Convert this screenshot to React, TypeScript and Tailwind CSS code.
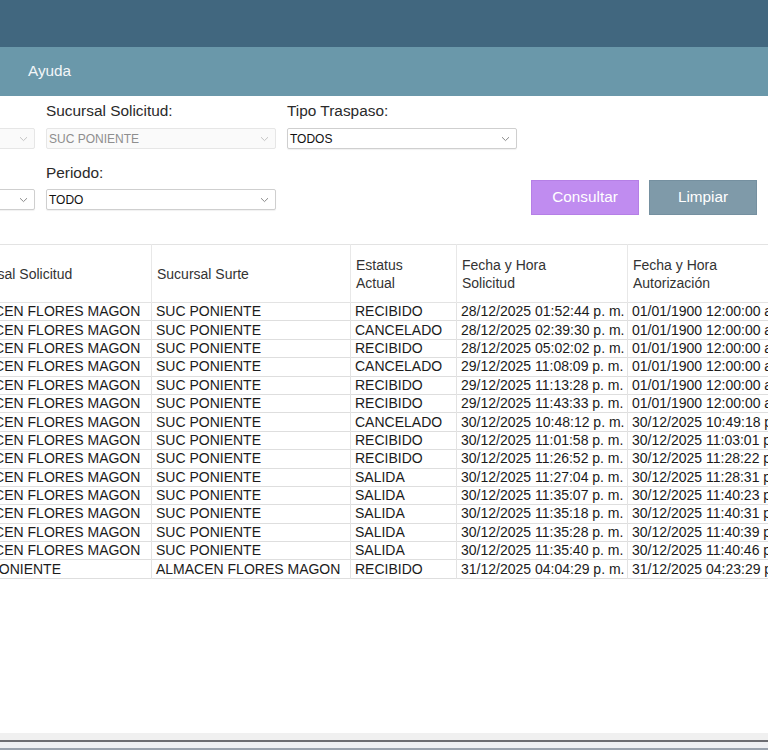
import React from "react";

const rows: [string, string, string, string, string][] = [
  ["ALMACEN FLORES MAGON", "SUC PONIENTE", "RECIBIDO", "28/12/2025 01:52:44 p. m.", "01/01/1900 12:00:00 a. m."],
  ["ALMACEN FLORES MAGON", "SUC PONIENTE", "CANCELADO", "28/12/2025 02:39:30 p. m.", "01/01/1900 12:00:00 a. m."],
  ["ALMACEN FLORES MAGON", "SUC PONIENTE", "RECIBIDO", "28/12/2025 05:02:02 p. m.", "01/01/1900 12:00:00 a. m."],
  ["ALMACEN FLORES MAGON", "SUC PONIENTE", "CANCELADO", "29/12/2025 11:08:09 p. m.", "01/01/1900 12:00:00 a. m."],
  ["ALMACEN FLORES MAGON", "SUC PONIENTE", "RECIBIDO", "29/12/2025 11:13:28 p. m.", "01/01/1900 12:00:00 a. m."],
  ["ALMACEN FLORES MAGON", "SUC PONIENTE", "RECIBIDO", "29/12/2025 11:43:33 p. m.", "01/01/1900 12:00:00 a. m."],
  ["ALMACEN FLORES MAGON", "SUC PONIENTE", "CANCELADO", "30/12/2025 10:48:12 p. m.", "30/12/2025 10:49:18 p. m."],
  ["ALMACEN FLORES MAGON", "SUC PONIENTE", "RECIBIDO", "30/12/2025 11:01:58 p. m.", "30/12/2025 11:03:01 p. m."],
  ["ALMACEN FLORES MAGON", "SUC PONIENTE", "RECIBIDO", "30/12/2025 11:26:52 p. m.", "30/12/2025 11:28:22 p. m."],
  ["ALMACEN FLORES MAGON", "SUC PONIENTE", "SALIDA", "30/12/2025 11:27:04 p. m.", "30/12/2025 11:28:31 p. m."],
  ["ALMACEN FLORES MAGON", "SUC PONIENTE", "SALIDA", "30/12/2025 11:35:07 p. m.", "30/12/2025 11:40:23 p. m."],
  ["ALMACEN FLORES MAGON", "SUC PONIENTE", "SALIDA", "30/12/2025 11:35:18 p. m.", "30/12/2025 11:40:31 p. m."],
  ["ALMACEN FLORES MAGON", "SUC PONIENTE", "SALIDA", "30/12/2025 11:35:28 p. m.", "30/12/2025 11:40:39 p. m."],
  ["ALMACEN FLORES MAGON", "SUC PONIENTE", "SALIDA", "30/12/2025 11:35:40 p. m.", "30/12/2025 11:40:46 p. m."],
  ["SUC PONIENTE", "ALMACEN FLORES MAGON", "RECIBIDO", "31/12/2025 04:04:29 p. m.", "31/12/2025 04:23:29 p. m."],
];

function Chevron({ light }: { light?: boolean }) {
  return (
    <svg width="9" height="6" viewBox="0 0 9 6" className="shrink-0">
      <path d="M1 1.2 L4.5 4.6 L8 1.2" fill="none" stroke={light ? "#c4c4c4" : "#8a8a8a"} strokeWidth="1" />
    </svg>
  );
}

function Select({ value, disabled }: { value: string; disabled?: boolean }) {
  return (
    <div
      className={
        disabled
          ? "h-[21px] w-full flex items-center justify-between pl-[2px] pr-[6px] border border-[#e6e6e6] bg-[#fafafa] rounded-[2px] text-[12px] text-[#8e8e8e]"
          : "h-[21px] w-full flex items-center justify-between pl-[2px] pr-[6px] border border-[#cfcfcf] bg-white rounded-[2px] text-[12px] text-[#111] shadow-[0_1px_1px_rgba(0,0,0,0.06)]"
      }
    >
      <span className="leading-none">{value}</span>
      <Chevron light={disabled} />
    </div>
  );
}

function Field({ label, value, disabled }: { label: string; value: string; disabled?: boolean }) {
  return (
    <div className="w-[230px] shrink-0 flex flex-col">
      <div className="h-[20px] leading-[20px] text-[15.4px] text-[#2a2a2a]">{label}</div>
      <div className="mt-[7px]">
        <Select value={value} disabled={disabled} />
      </div>
    </div>
  );
}

const headers = [
  ["Sucursal Solicitud"],
  ["Sucursal Surte"],
  ["Estatus", "Actual"],
  ["Fecha y Hora", "Solicitud"],
  ["Fecha y Hora", "Autorización"],
];

export default function App() {
  return (
    <div
      className="w-[768px] h-[750px] overflow-hidden flex flex-col bg-white"
      style={{ fontFamily: '"Liberation Sans", Arial, sans-serif' }}
    >
      <div className="h-[47px] bg-[#41677f] shrink-0" />
      <div className="h-[49px] bg-[#6a98aa] shrink-0 flex items-center pl-[28px]">
        <span className="text-[15.3px] text-[#f2f6f8]">Ayuda</span>
      </div>

      <div className="pt-[5px] shrink-0">
        <div className="-ml-[195px] flex gap-[11px]">
          <Field label="Sucursal:" value="ALMACEN" disabled />
          <Field label="Sucursal Solicitud:" value="SUC PONIENTE" disabled />
          <Field label="Tipo Traspaso:" value="TODOS" />
        </div>
        <div className="-ml-[195px] mt-[14px] flex gap-[11px] pr-[11px]">
          <div className="w-[230px] shrink-0 flex flex-col">
            <div className="h-[20px]" />
            <div className="mt-[6px]">
              <Select value="TODAS" />
            </div>
          </div>
          <div className="w-[230px] shrink-0 flex flex-col">
            <div className="h-[20px] leading-[20px] text-[15.4px] text-[#2a2a2a]">Periodo:</div>
            <div className="mt-[6px]">
              <Select value="TODO" />
            </div>
          </div>
          <div className="ml-auto flex gap-[10px] mt-[17px]">
            <button className="w-[108px] h-[35px] bg-[#c08cf0] text-white text-[15.3px] border border-[#b57fe6]">Consultar</button>
            <button className="w-[108px] h-[35px] bg-[#7f9aa9] text-white text-[15.3px] border border-[#7590a0]">Limpiar</button>
          </div>
        </div>
      </div>

      <div className="mt-[29px] -ml-[49px] shrink-0">
        <table className="table-fixed border-collapse text-[14px]" style={{ width: 900 }}>
          <colgroup>
            <col style={{ width: 200 }} />
            <col style={{ width: 199 }} />
            <col style={{ width: 106 }} />
            <col style={{ width: 171 }} />
            <col style={{ width: 224 }} />
          </colgroup>
          <thead>
            <tr className="h-[58px] border-t border-b border-[#e3e3e3]">
              {headers.map((h, i) => (
                <th
                  key={i}
                  className={
                    i === 0
                      ? "text-left font-normal text-[#333] pl-[9px] leading-[18px] border-l border-[#e8e8e8] align-middle whitespace-nowrap"
                      : "text-left font-normal text-[#333] pl-[5px] leading-[18px] border-l border-[#e8e8e8] align-middle whitespace-nowrap"
                  }
                >
                  {h.map((t, j) => (
                    <div key={j}>{t}</div>
                  ))}
                </th>
              ))}
            </tr>
          </thead>
          <tbody>
            {rows.map((r, i) => (
              <tr key={i} className="h-[18.4px] border-b border-[#dedede]">
                {r.map((c, j) => (
                  <td
                    key={j}
                    className="pl-[4px] py-0 leading-[17px] text-[#1b1b1b] border-l border-[#e3e3e3] whitespace-nowrap overflow-hidden"
                  >
                    {c}
                  </td>
                ))}
              </tr>
            ))}
          </tbody>
        </table>
      </div>

      <div className="flex-1" />
      <div className="shrink-0 flex flex-col">
        <div className="h-[7px] bg-[#f0f0f0]" />
        <div className="h-[2px] bg-[#6c6c72]" />
        <div className="h-[6px] bg-[#eeeff3]" />
        <div className="h-[2px] bg-[#9aa2ae]" />
      </div>
    </div>
  );
}
